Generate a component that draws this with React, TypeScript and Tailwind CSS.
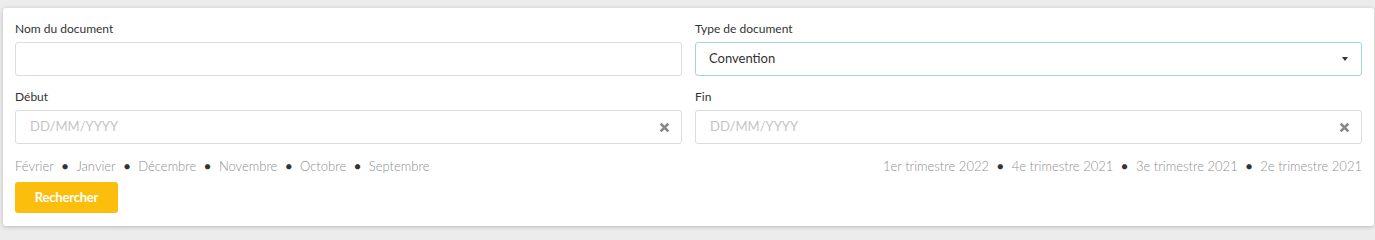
import { Fragment } from "react";

const months = ["Février", "Janvier", "Décembre", "Novembre", "Octobre", "Septembre"];
const quarters = ["1er trimestre 2022", "4e trimestre 2021", "3e trimestre 2021", "2e trimestre 2021"];

function Shortcuts({ items }: { items: string[] }) {
  return (
    <div className="flex items-center text-[13px] leading-4 font-light text-[#8f8f8f]">
      {items.map((item, i) => (
        <Fragment key={item}>
          {i > 0 && <span className="mx-[8px] text-[#333] text-[11px]">●</span>}
          <span className="cursor-pointer">{item}</span>
        </Fragment>
      ))}
    </div>
  );
}

function Label({ children }: { children: string }) {
  return <label className="block text-[12px] leading-4 font-normal text-[#333] mb-[5px]">{children}</label>;
}

function ClearIcon() {
  return (
    <svg width="11" height="11" viewBox="0 0 10 10" className="text-[#888]">
      <path d="M1.5 1.5 L8.5 8.5 M8.5 1.5 L1.5 8.5" stroke="currentColor" strokeWidth="2.5" strokeLinecap="butt" />
    </svg>
  );
}

function DateInput() {
  return (
    <div className="flex items-center h-[34px] border border-[#dcdcdc] rounded-[3px] bg-white pl-[14px] pr-[11px]">
      <input
        type="text"
        placeholder="DD/MM/YYYY"
        className="flex-1 bg-transparent text-[13px] text-[#333] outline-none placeholder:text-[#c4c4c4]"
      />
      <ClearIcon />
    </div>
  );
}

export default function App() {
  return (
    <div className="min-h-[240px] bg-[#ececec] pt-[8px] pl-[3px]" style={{ fontFamily: "Lato, 'Open Sans', sans-serif" }}>
      <div className="bg-white rounded-[3px] shadow-[0_1px_4px_rgba(0,0,0,0.22)] pt-[13px] pb-[13px] pl-[12px] pr-[12px] mr-[1px]">
        <div className="grid grid-cols-2 gap-x-[13px]">
          <div>
            <Label>Nom du document</Label>
            <input
              type="text"
              className="block w-full h-[34px] border border-[#dcdcdc] rounded-[3px] px-[14px] text-[13px] outline-none"
            />
          </div>
          <div>
            <Label>Type de document</Label>
            <div className="flex items-center justify-between h-[34px] border border-[#a3d2e2] rounded-[3px] pl-[13px] pr-[13px]">
              <span className="text-[13px] text-[#333]">Convention</span>
              <span className="w-0 h-0 border-l-[3.5px] border-r-[3.5px] border-t-[4px] border-l-transparent border-r-transparent border-t-[#333]" />
            </div>
          </div>

          <div className="mt-[13px]">
            <Label>Début</Label>
            <DateInput />
          </div>
          <div className="mt-[13px]">
            <Label>Fin</Label>
            <DateInput />
          </div>

          <div className="mt-[14px]">
            <Shortcuts items={months} />
          </div>
          <div className="mt-[14px] flex justify-end">
            <Shortcuts items={quarters} />
          </div>
        </div>

        <button className="mt-[8px] w-[103px] h-[31px] rounded-[3px] bg-[#fbbe0d] text-white text-[13px] font-bold tracking-[-0.2px]">
          Rechercher
        </button>
      </div>
    </div>
  );
}
